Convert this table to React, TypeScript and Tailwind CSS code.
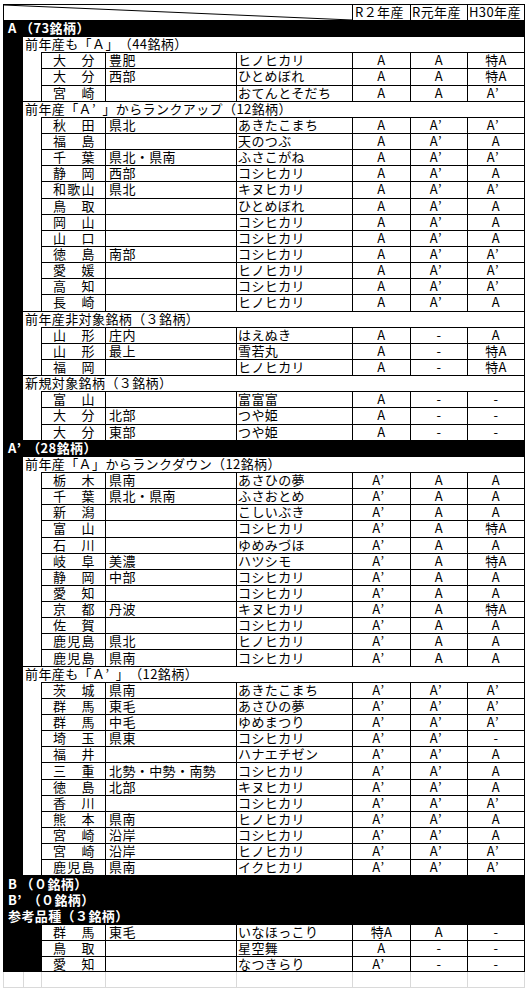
import type { ReactNode } from 'react'

type Row =
  | { kind: 'band'; label: string }
  | { kind: 'cat'; label: string }
  | { kind: 'data'; v: [string, string, string, string, string, string]; wide?: boolean; last?: boolean }

const band = (label: string): Row => ({ kind: 'band', label })
const cat = (label: string): Row => ({ kind: 'cat', label })
const d = (s: string, wide = false, last = false): Row => {
  const p = s.split('|')
  return { kind: 'data', v: [p[0], p[1], p[2], p[3], p[4], p[5]], wide, last }
}

const ROWS: Row[] = [
  band('A （73銘柄）'),
  cat('前年産も「Ａ」（44銘柄）'),
  d('大分|豊肥|ヒノヒカリ|A|A|特A'),
  d('大分|西部|ひとめぼれ|A|A|特A'),
  d('宮崎||おてんとそだち|A|A|A’'),
  cat('前年産「Ａ’」からランクアップ（12銘柄）'),
  d('秋田|県北|あきたこまち|A|A’|A’'),
  d('福島||天のつぶ|A|A’|A'),
  d('千葉|県北・県南|ふさこがね|A|A’|A’'),
  d('静岡|西部|コシヒカリ|A|A’|A'),
  d('和歌山|県北|キヌヒカリ|A|A’|A’'),
  d('鳥取||ひとめぼれ|A|A’|A'),
  d('岡山||コシヒカリ|A|A’|A'),
  d('山口||コシヒカリ|A|A’|A'),
  d('徳島|南部|コシヒカリ|A|A’|A’'),
  d('愛媛||ヒノヒカリ|A|A’|A’'),
  d('高知||コシヒカリ|A|A’|A’'),
  d('長崎||ヒノヒカリ|A|A’|A'),
  cat('前年産非対象銘柄（３銘柄）'),
  d('山形|庄内|はえぬき|A|-|A'),
  d('山形|最上|雪若丸|A|-|特A'),
  d('福岡||ヒノヒカリ|A|-|特A'),
  cat('新規対象銘柄（３銘柄）'),
  d('富山||富富富|A|-|-'),
  d('大分|北部|つや姫|A|-|-'),
  d('大分|東部|つや姫|A|-|-'),
  band('A’（28銘柄）'),
  cat('前年産「Ａ」からランクダウン（12銘柄）'),
  d('栃木|県南|あさひの夢|A’|A|A'),
  d('千葉|県北・県南|ふさおとめ|A’|A|A'),
  d('新潟||こしいぶき|A’|A|A'),
  d('富山||コシヒカリ|A’|A|特A'),
  d('石川||ゆめみづほ|A’|A|A'),
  d('岐阜|美濃|ハツシモ|A’|A|特A'),
  d('静岡|中部|コシヒカリ|A’|A|A'),
  d('愛知||コシヒカリ|A’|A|A'),
  d('京都|丹波|キヌヒカリ|A’|A|特A'),
  d('佐賀||コシヒカリ|A’|A|A'),
  d('鹿児島|県北|ヒノヒカリ|A’|A|A'),
  d('鹿児島|県南|コシヒカリ|A’|A|A'),
  cat('前年産も「Ａ’」（12銘柄）'),
  d('茨城|県南|あきたこまち|A’|A’|A’'),
  d('群馬|東毛|あさひの夢|A’|A’|A’'),
  d('群馬|中毛|ゆめまつり|A’|A’|A’'),
  d('埼玉|県東|コシヒカリ|A’|A’|-'),
  d('福井||ハナエチゼン|A’|A’|A'),
  d('三重|北勢・中勢・南勢|コシヒカリ|A’|A’|A'),
  d('徳島|北部|キヌヒカリ|A’|A’|A'),
  d('香川||コシヒカリ|A’|A’|A’'),
  d('熊本|県南|ヒノヒカリ|A’|A’|A'),
  d('宮崎|沿岸|コシヒカリ|A’|A’|A'),
  d('宮崎|沿岸|ヒノヒカリ|A’|A’|A’'),
  d('鹿児島|県南|イクヒカリ|A’|A’|A’'),
  band('B （０銘柄）'),
  band('B’（０銘柄）'),
  band('参考品種（３銘柄）'),
  d('群馬|東毛|いなほっこり|特A|A|-', true),
  d('鳥取||星空舞|A|-|-', true),
  d('愛知||なつきらり|A’|-|-', true, true),
]

// full-width apostrophe, as in the sheet's font
function Txt({ s }: { s: string }) {
  const parts: ReactNode[] = []
  s.split('’').forEach((p, i, arr) => {
    parts.push(p)
    if (i < arr.length - 1)
      parts.push(
        <span key={i} className="inline-block w-[0.8em] text-left">
          ’
        </span>,
      )
  })
  return <>{parts}</>
}

function DataRow({ v, wide, last }: { v: string[]; wide?: boolean; last?: boolean }) {
  const cell = `flex items-center pb-[2px] border-t border-l border-black ${last ? 'border-b' : ''}`
  return (
    <div className="flex h-[16.15px]">
      {wide ? (
        <div className="w-[38px] bg-black" />
      ) : (
        <>
          <div className="w-[20px] bg-black" />
          <div className="w-[18px]" />
        </>
      )}
      <div className={`${cell} w-[64px] justify-between pl-[11px] pr-[10px]`}>
        {v[0].split('').map((c, i) => (
          <span key={i}>{c}</span>
        ))}
      </div>
      <div className={`${cell} w-[131px] pl-[3px]`}>{v[1]}</div>
      <div className={`${cell} w-[116px] pl-[1px]`}>{v[2]}</div>
      <div className={`${cell} w-[58px] justify-center`}>
        <Txt s={v[3]} />
      </div>
      <div className={`${cell} w-[57px] justify-center`}>
        <Txt s={v[4]} />
      </div>
      <div className={`${cell} w-[58px] justify-center border-r`}>
        <Txt s={v[5]} />
      </div>
    </div>
  )
}

export default function App() {
  return (
    <div className="min-h-[990px] bg-white pl-[3px] pt-[4px] font-['Noto_Sans_CJK_JP',sans-serif] text-[13px] leading-none tracking-[0.4px] text-black [text-spacing-trim:space-all]">
      <div className="w-[522px]">
        {/* header */}
        <div className="flex h-[16px]">
          <div className="relative w-[349px] border-t border-l border-black">
            <svg className="absolute inset-0 h-full w-full" viewBox="0 0 349 16" preserveAspectRatio="none">
              <line x1="0" y1="0" x2="349" y2="16" stroke="#000" strokeWidth="1" vectorEffect="non-scaling-stroke" />
            </svg>
          </div>
          <div className="flex w-[58px] items-center border-t border-l border-black pb-[2px] pl-[2px]">R２年産</div>
          <div className="flex w-[57px] items-center border-t border-l border-black pb-[2px] pl-[1px]">R元年産</div>
          <div className="flex w-[58px] items-center border-t border-l border-r border-black pb-[2px] pl-[1px]">H30年産</div>
        </div>

        {ROWS.map((r, i) => {
          if (r.kind === 'band')
            return (
              <div key={i} className="flex h-[16.15px] items-center bg-black pb-[1px] pl-[5px] font-bold text-white">
                <Txt s={r.label} />
              </div>
            )
          if (r.kind === 'cat')
            return (
              <div key={i} className="flex h-[16.15px]">
                <div className="w-[20px] bg-black" />
                <div className="flex flex-1 items-center border-t border-r border-black pb-[2px] pl-[2px]">
                  <Txt s={r.label} />
                </div>
              </div>
            )
          return <DataRow key={i} v={r.v} wide={r.wide} last={r.last} />
        })}

        {/* empty sheet gridlines below the table */}
        <div className="flex h-[16px] border-b border-[#d9d9d9]">
          <div className="w-[20px] border-l border-[#d9d9d9]" />
          <div className="w-[18px] border-l border-[#d9d9d9]" />
          <div className="w-[64px] border-l border-[#d9d9d9]" />
          <div className="w-[131px] border-l border-[#d9d9d9]" />
          <div className="w-[116px] border-l border-[#d9d9d9]" />
          <div className="w-[58px] border-l border-[#d9d9d9]" />
          <div className="w-[57px] border-l border-[#d9d9d9]" />
          <div className="w-[58px] border-l border-r border-[#d9d9d9]" />
        </div>
      </div>
    </div>
  )
}
